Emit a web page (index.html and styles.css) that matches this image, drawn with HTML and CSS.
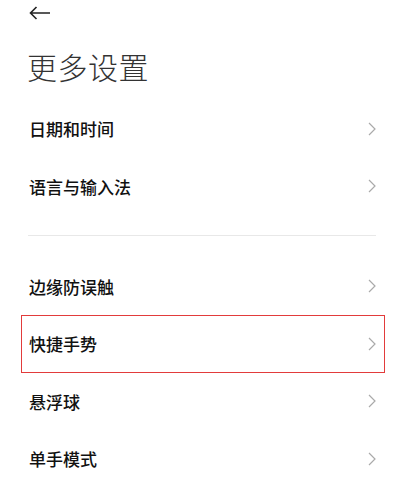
FILE: index.html
```html
<!DOCTYPE html>
<html lang="zh-CN">
<head>
    <meta charset="UTF-8">
    <meta name="viewport" content="width=device-width, initial-scale=1.0">
    <title>更多设置</title>
    <link rel="stylesheet" href="styles.css">
</head>
<body>
    <header>
        <a href="#" class="back-link">
            <svg width="22" height="14" viewBox="0 0 22 14">
                <path d="M21 7H1.5M7.5 1L1.5 7l6 6" fill="none" stroke="#222" stroke-width="1.6"/>
            </svg>
        </a>
        <h1>更多设置</h1>
    </header>
    <main>
        <div class="group">
            <div class="row"><span>日期和时间</span><svg class="chev" viewBox="0 0 8 14"><path d="M1 1l6 6-6 6"/></svg></div>
            <div class="row"><span>语言与输入法</span><svg class="chev" viewBox="0 0 8 14"><path d="M1 1l6 6-6 6"/></svg></div>
        </div>
        <div class="divider"></div>
        <div class="group">
            <div class="row"><span>边缘防误触</span><svg class="chev" viewBox="0 0 8 14"><path d="M1 1l6 6-6 6"/></svg></div>
            <div class="row selected"><span>快捷手势</span><svg class="chev" viewBox="0 0 8 14"><path d="M1 1l6 6-6 6"/></svg></div>
            <div class="row"><span>悬浮球</span><svg class="chev" viewBox="0 0 8 14"><path d="M1 1l6 6-6 6"/></svg></div>
            <div class="row"><span>单手模式</span><svg class="chev" viewBox="0 0 8 14"><path d="M1 1l6 6-6 6"/></svg></div>
        </div>
    </main>
</body>
</html>
```

FILE: styles.css
```css
body {
    margin: 0;
    background-color: #fff;
    font-family: "Noto Sans CJK SC", "Noto Sans", sans-serif;
    color: #111;
}
header {
    padding: 0 0 0 29px;
}
.back-link {
    display: flex;
    align-items: center;
    height: 26px;
}
h1 {
    margin: 20px 0 14px -2px;
    font-size: 30px;
    line-height: 40px;
    font-weight: 300;
    color: #333;
    letter-spacing: 0.5px;
}
.row {
    display: flex;
    align-items: center;
    justify-content: space-between;
    height: 57.5px;
    margin: 0 13px 0 21px;
    padding: 0 9px 0 8px;
    font-size: 17px;
    font-weight: 500;
}
.row.selected {
    box-shadow: inset 0 0 0 1px #e23b3b;
}
.chev {
    width: 8px;
    height: 14px;
    fill: none;
    stroke: #aaa;
    stroke-width: 1.2;
}
.divider {
    height: 1px;
    background-color: #e8e8e8;
    margin: 19.5px 22px 22px 28px;
}
```
